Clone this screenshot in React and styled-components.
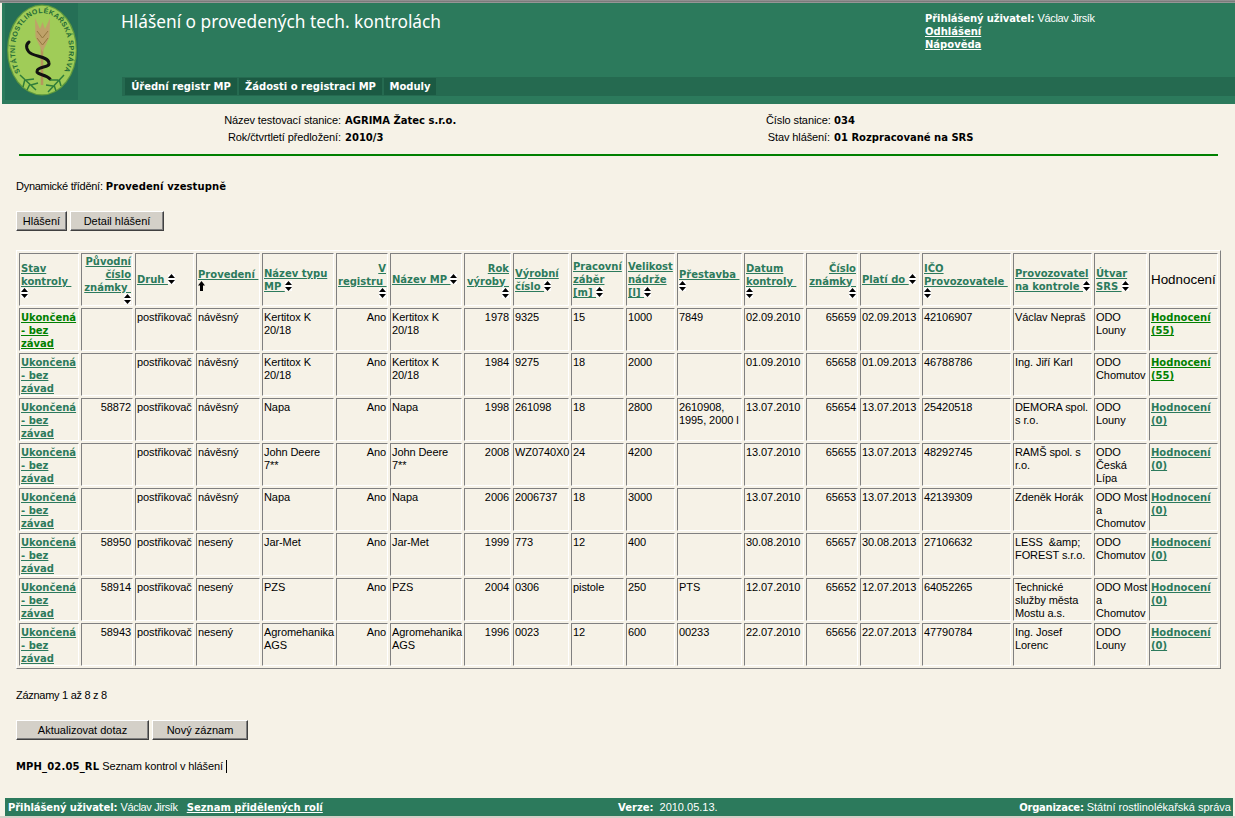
import styled, { createGlobalStyle } from 'styled-components';

const GREEN = '#2c7a5c';
const PAPER = '#f6f2e7';
const BOLD_FONT = `'DejaVu Sans', Verdana, sans-serif`;

const GlobalStyle = createGlobalStyle`
  html, body {
    margin: 0;
    padding: 0;
    height: 818px;
    overflow: hidden;
    background: ${PAPER};
  }
  body {
    font-family: 'Liberation Sans', Arial, sans-serif;
    font-size: 11px;
    line-height: 13px;
    color: #000;
  }
`;

const Page = styled.div`
  height: 818px;
  display: flex;
  flex-direction: column;
`;

const TopEdge = styled.div`
  height: 3px;
  background: linear-gradient(#9a9a9a, #6e6e6e 70%, #c8c8c8);
`;

const Header = styled.header`
  height: 101px;
  margin-left: 2px;
  padding-left: 3px;
  display: flex;
  background: ${GREEN};
  color: #fff;
`;

const LogoBox = styled.div`
  width: 73px;
  height: 97px;
  flex: none;
`;

const HeaderMain = styled.div`
  flex: 1;
  margin-left: 44px;
  display: flex;
  flex-direction: column;
`;

const HeaderTop = styled.div`
  height: 74px;
  display: flex;
  justify-content: space-between;
`;

const Title = styled.h1`
  margin: 0 0 0 -1px;
  padding-top: 8px;
  font-family: 'Noto Sans', sans-serif;
  font-size: 17.3px;
  line-height: 22px;
  font-weight: 400;
`;

const UserBox = styled.div`
  width: 310px;
  padding-top: 9px;
`;

const Strong = styled.b`
  font-family: ${BOLD_FONT};
  font-size: 10px;
  font-weight: 700;
  letter-spacing: ${p => p.$spacing || 0}px;
`;

const Tight = styled.span`
  letter-spacing: ${p => p.$by}px;
`;

const LightLink = styled.a`
  display: ${p => (p.$block ? 'block' : 'inline')};
  font-family: ${BOLD_FONT};
  font-size: 10px;
  font-weight: 700;
  color: #fff;
  text-decoration: underline;
`;

const Nav = styled.nav`
  height: 19px;
  padding: 1px 0 1px 3px;
  box-sizing: border-box;
  display: flex;
  gap: 2px;
  background: #256a50;
`;

const NavItem = styled.a`
  width: ${p => p.$width}px;
  font-family: ${BOLD_FONT};
  font-size: 10px;
  font-weight: 700;
  line-height: 17px;
  text-align: center;
  color: #fff;
  background: #1b5a43;
  text-decoration: none;
`;

const Info = styled.section`
  padding-top: 8px;
  display: grid;
  grid-template-columns: 341px 417px 64px 1fr;
  column-gap: 4px;
  line-height: 17px;
  white-space: nowrap;
`;

const InfoLabel = styled.div`
  text-align: right;
  letter-spacing: -0.1px;
`;

const Divider = styled.hr`
  height: 2px;
  margin: 8px 17px 0 19px;
  border: 0;
  background: #008000;
`;

const Content = styled.main`
  padding-left: 16px;
`;

const Line = styled.div`
  margin-top: ${p => p.$top}px;
  white-space: pre;
`;

const Buttons = styled.div`
  margin-top: 18px;
  display: flex;
  gap: 3px;
`;

const Button = styled.button`
  width: ${p => p.$width}px;
  height: 20px;
  padding: 0;
  box-sizing: border-box;
  border: 1px solid;
  border-color: #fff #404040 #404040 #fff;
  box-shadow: inset -1px -1px 0 #808080;
  background: #d4d0c8;
  font-family: 'Liberation Sans', Arial, sans-serif;
  font-size: 11px;
  color: #000;
`;

const Table = styled.table`
  width: 1205px;
  margin-top: 19px;
  table-layout: fixed;
  border-collapse: separate;
  border-spacing: 2px;
  border: 1px solid;
  border-color: #fff #808080 #808080 #fff;
`;

const HeadCell = styled.th`
  height: 53px;
  padding: 1px;
  box-sizing: border-box;
  border: 1px solid;
  border-color: #808080 #fff #fff #808080;
  font-family: ${p => (p.$plain ? `'Liberation Sans', Arial, sans-serif` : BOLD_FONT)};
  font-size: ${p => (p.$plain ? '13.4px' : '10px')};
  font-weight: ${p => (p.$plain ? 400 : 700)};
  line-height: 13px;
  text-align: ${p => p.$align};
  vertical-align: middle;
  white-space: pre;
`;

const Cell = styled.td`
  height: 43px;
  padding: 2px 1px 0;
  box-sizing: border-box;
  border: 1px solid;
  border-color: #808080 #fff #fff #808080;
  line-height: 13px;
  letter-spacing: -0.08px;
  text-align: ${p => p.$align};
  vertical-align: top;
  white-space: pre;
`;

const SortLink = styled.a`
  color: ${GREEN};
  text-decoration: underline;
`;

const RowLink = styled.a`
  font-family: ${BOLD_FONT};
  font-size: 10px;
  font-weight: 700;
  letter-spacing: 0;
  color: ${p => (p.$active ? '#008000' : GREEN)};
  text-decoration: underline;
`;

const IconSvg = styled.svg`
  display: ${p => (p.$broken ? 'block' : 'inline-block')};
  margin-left: ${p => (p.$broken && p.$align === 'right' ? 'auto' : '0')};
  vertical-align: -1px;
`;

const Caret = styled.span`
  display: inline-block;
  width: 1px;
  height: 13px;
  margin-left: 3px;
  background: #000;
  vertical-align: -3px;
`;

const Footer = styled.footer`
  height: 18px;
  margin: 25px 2px 0 5px;
  padding: 0 2px 0 3px;
  display: grid;
  grid-template-columns: 610px 1fr auto;
  align-items: center;
  background: ${GREEN};
  color: #fff;
  white-space: pre;
`;

const FooterGap = styled.span`
  margin-left: ${p => p.$left}px;
`;

const BottomEdge = styled.div`
  flex: 1;
  background: #d4d0c8;
`;

function SortIcon({ broken, align }) {
  return (
    <IconSvg $broken={broken} $align={align} width="7" height="10" viewBox="0 0 7 10">
      <rect width="7" height="10" fill="#fff" />
      <path d="M3.5 0 L7 4 H0 Z M0 6 H7 L3.5 10 Z" fill="#000" />
    </IconSvg>
  );
}

function UpArrow() {
  return (
    <IconSvg $broken width="7" height="10" viewBox="0 0 7 10">
      <path d="M3.5 0 L7 4.5 H5 V10 H2 V4.5 H0 Z" fill="#000" />
    </IconSvg>
  );
}

function Logo() {
  return (
    <svg width="73" height="97" viewBox="0 0 73 97">
      <rect width="73" height="97" fill="#256f56" />
      <ellipse cx="37" cy="47" rx="35" ry="45.5" fill="#5f9a3e" />
      <ellipse cx="37" cy="47" rx="33.8" ry="44.3" fill="#a0cc58" />
      <path id="logo-ring" d="M15.3 69 A27 37 0 1 1 58.7 69" fill="none" />
      <text fontFamily="'Liberation Sans', sans-serif" fontSize="7" fontWeight="700" fill="#1f6a35">
        <textPath href="#logo-ring" textLength="145">
          STÁTNÍ ROSTLINOLÉKAŘSKÁ SPRÁVA
        </textPath>
      </text>
      <path d="M37 30 V82" stroke="#b5975c" strokeWidth="2.5" />
      <path
        d="M30 15 L30.5 34 L37.5 49 L44.5 34 L45 15 L40 26 L37.5 19 L35 26 Z"
        fill="#bfa269"
      />
      <path d="M32 28 L37.5 35 L43 28 M32 35 L37.5 42 L43 35" stroke="#94783f" fill="none" />
      <path
        d="M24 39 C20 42 21 48 27 51 C33 54 43 54 44 60 C45 65 33 63 32 68 C31 72 41 71 45 76"
        stroke="#111"
        strokeWidth="3"
        strokeLinecap="round"
        fill="none"
      />
      <path
        d="M15 72 L31 87 M20 76 L18 84 M25 81 L22 87 M21 77 L29 76 M26 82 L33 80"
        stroke="#2f7d3a"
        strokeWidth="1.5"
        fill="none"
      />
      <path
        d="M59 72 L43 89 M54 76 L56 83 M49 82 L51 88 M53 77 L45 77 M48 83 L41 82"
        stroke="#2f7d3a"
        strokeWidth="1.5"
        fill="none"
      />
    </svg>
  );
}

const columns = [
  { label: 'Stav\nkontroly\u00a0', width: 60, align: 'left', iconBroken: true },
  { label: 'Původní\nčíslo\nznámky\u00a0', width: 52, align: 'right', iconBroken: true },
  { label: 'Druh\u00a0', width: 59, align: 'left' },
  { label: 'Provedení\u00a0', width: 64, align: 'left', arrow: true },
  { label: 'Název typu\nMP\u00a0', width: 72, align: 'left' },
  { label: 'V\nregistru\u00a0', width: 52, align: 'right', iconBroken: true },
  { label: 'Název MP\u00a0', width: 72, align: 'left' },
  { label: 'Rok\nvýroby\u00a0', width: 47, align: 'right', iconBroken: true },
  { label: 'Výrobní\nčíslo\u00a0', width: 56, align: 'left' },
  { label: 'Pracovní\nzáběr\n[m]\u00a0', width: 53, align: 'left' },
  { label: 'Velikost\nnádrže\n[l]\u00a0', width: 49, align: 'left' },
  { label: 'Přestavba\u00a0', width: 65, align: 'left', iconBroken: true },
  { label: 'Datum\nkontroly\u00a0', width: 60, align: 'left', iconBroken: true },
  { label: 'Číslo\nznámky\u00a0', width: 52, align: 'right', iconBroken: true },
  { label: 'Platí do\u00a0', width: 60, align: 'left' },
  { label: 'IČO\nProvozovatele\u00a0', width: 89, align: 'left', iconBroken: true },
  { label: 'Provozovatel\nna kontrole\u00a0', width: 79, align: 'left' },
  { label: 'Útvar\nSRS\u00a0', width: 53, align: 'left' },
];

const rows = [
  ['', 'návěsný', 'Kertitox K\n20/18', '1978', '9325', '15', '1000', '7849', '02.09.2010', '65659', '02.09.2013', '42106907', 'Václav Nepraš', 'ODO\nLouny', '55'],
  ['', 'návěsný', 'Kertitox K\n20/18', '1984', '9275', '18', '2000', '', '01.09.2010', '65658', '01.09.2013', '46788786', 'Ing. Jiří Karl', 'ODO\nChomutov', '55'],
  ['58872', 'návěsný', 'Napa', '1998', '261098', '18', '2800', '2610908,\n1995, 2000 l', '13.07.2010', '65654', '13.07.2013', '25420518', 'DEMORA spol.\ns r.o.', 'ODO\nLouny', '0'],
  ['', 'návěsný', 'John Deere\n7**', '2008', 'WZ0740X0', '24', '4200', '', '13.07.2010', '65655', '13.07.2013', '48292745', 'RAMŠ spol. s\nr.o.', 'ODO\nČeská\nLípa', '0'],
  ['', 'návěsný', 'Napa', '2006', '2006737', '18', '3000', '', '13.07.2010', '65653', '13.07.2013', '42139309', 'Zdeněk Horák', 'ODO Most\na\nChomutov', '0'],
  ['58950', 'nesený', 'Jar-Met', '1999', '773', '12', '400', '', '30.08.2010', '65657', '30.08.2013', '27106632', 'LESS \u00a0&amp;\nFOREST s.r.o.', 'ODO\nChomutov', '0'],
  ['58914', 'nesený', 'PZS', '2004', '0306', 'pistole', '250', 'PTS', '12.07.2010', '65652', '12.07.2013', '64052265', 'Technické\nslužby města\nMostu a.s.', 'ODO Most\na\nChomutov', '0'],
  ['58943', 'nesený', 'Agromehanika\nAGS', '1996', '0023', '12', '600', '00233', '22.07.2010', '65656', '22.07.2013', '47790784', 'Ing. Josef\nLorenc', 'ODO\nLouny', '0'],
];

function ReportRow({ row, index }) {
  const [original, build, typeName, year, serial, boom, tank, rebuild, date, mark, valid, ico, operator, unit, score] = row;
  return (
    <tr>
      <Cell $align="left">
        <RowLink href="#" $active={index === 0}>{'Ukončená\n- bez\nzávad'}</RowLink>
      </Cell>
      <Cell $align="right">{original}</Cell>
      <Cell $align="left">postřikovač</Cell>
      <Cell $align="left">{build}</Cell>
      <Cell $align="left">{typeName}</Cell>
      <Cell $align="right">Ano</Cell>
      <Cell $align="left">{typeName}</Cell>
      <Cell $align="right">{year}</Cell>
      <Cell $align="left">{serial}</Cell>
      <Cell $align="left">{boom}</Cell>
      <Cell $align="left">{tank}</Cell>
      <Cell $align="left">{rebuild}</Cell>
      <Cell $align="left">{date}</Cell>
      <Cell $align="right">{mark}</Cell>
      <Cell $align="left">{valid}</Cell>
      <Cell $align="left">{ico}</Cell>
      <Cell $align="left">{operator}</Cell>
      <Cell $align="left">{unit}</Cell>
      <Cell $align="left">
        <RowLink href="#" $active={index < 2}>{`Hodnocení\n(${score})`}</RowLink>
      </Cell>
    </tr>
  );
}

export default function App() {
  return (
    <Page>
      <GlobalStyle />
      <TopEdge />
      <Header>
        <LogoBox>
          <Logo />
        </LogoBox>
        <HeaderMain>
          <HeaderTop>
            <Title>Hlášení o provedených tech. kontrolách</Title>
            <UserBox>
              <div>
                <Strong $spacing={-0.1}>Přihlášený uživatel:</Strong> <Tight $by={-0.35}>Václav Jirsík</Tight>
              </div>
              <LightLink href="#" $block>Odhlášení</LightLink>
              <LightLink href="#" $block>Nápověda</LightLink>
            </UserBox>
          </HeaderTop>
          <Nav>
            <NavItem href="#" $width={112}>Úřední registr MP</NavItem>
            <NavItem href="#" $width={143}>Žádosti o registraci MP</NavItem>
            <NavItem href="#" $width={52}>Moduly</NavItem>
          </Nav>
        </HeaderMain>
      </Header>

      <Info>
        <InfoLabel>Název testovací stanice:</InfoLabel>
        <Strong>AGRIMA Žatec s.r.o.</Strong>
        <InfoLabel>Číslo stanice:</InfoLabel>
        <Strong>034</Strong>
        <InfoLabel>Rok/čtvrtletí předložení:</InfoLabel>
        <Strong>2010/3</Strong>
        <InfoLabel>Stav hlášení:</InfoLabel>
        <Strong>01 Rozpracované na SRS</Strong>
      </Info>
      <Divider />

      <Content>
        <Line $top={24}>
          <Tight $by={-0.28}>Dynamické třídění:</Tight> <Strong $spacing={0.1}>Provedení vzestupně</Strong>
        </Line>
        <Buttons>
          <Button $width={51}>Hlášení</Button>
          <Button $width={94}>Detail hlášení</Button>
        </Buttons>

        <Table>
          <colgroup>
            {columns.map(col => (
              <col key={col.label} style={{ width: col.width }} />
            ))}
            <col style={{ width: 69 }} />
          </colgroup>
          <thead>
            <tr>
              {columns.map(col => (
                <HeadCell key={col.label} $align={col.align}>
                  <SortLink href="#">{col.label}</SortLink>
                  {col.arrow ? <UpArrow /> : <SortIcon broken={col.iconBroken} align={col.align} />}
                </HeadCell>
              ))}
              <HeadCell $align="left" $plain>Hodnocení</HeadCell>
            </tr>
          </thead>
          <tbody>
            {rows.map((row, index) => (
              <ReportRow key={row[9]} row={row} index={index} />
            ))}
          </tbody>
        </Table>

        <Line $top={20}>
          <Tight $by={-0.28}>Záznamy 1 až 8 z 8</Tight>
        </Line>
        <Buttons>
          <Button $width={133}>Aktualizovat dotaz</Button>
          <Button $width={96}>Nový záznam</Button>
        </Buttons>
        <Line $top={20}>
          <Strong $spacing={0.15}>MPH_02.05_RL</Strong> <Tight $by={-0.12}>Seznam kontrol v hlášení</Tight>
          <Caret />
        </Line>
      </Content>

      <Footer>
        <span>
          <Strong $spacing={-0.1}>Přihlášený uživatel:</Strong> <Tight $by={-0.35}>Václav Jirsík</Tight>
          <FooterGap $left={9}>
            <LightLink href="#">Seznam přidělených rolí</LightLink>
          </FooterGap>
        </span>
        <span>
          <Strong>Verze:</Strong>
          <FooterGap $left={6}>2010.05.13.</FooterGap>
        </span>
        <span>
          <Strong $spacing={-0.25}>Organizace:</Strong> Státní rostlinolékařská správa
        </span>
      </Footer>
      <BottomEdge />
    </Page>
  );
}
